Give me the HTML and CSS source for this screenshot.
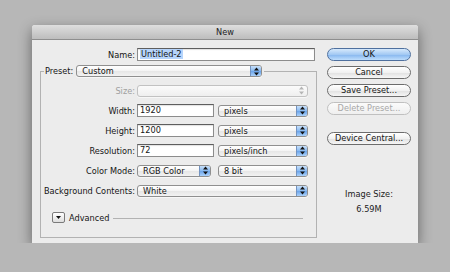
FILE: index.html
```html
<!DOCTYPE html>
<html lang="en">
<head>
    <meta charset="UTF-8">
    <title>New</title>
    <link rel="stylesheet" href="styles.css">
</head>
<body>
    <div class="dialog">
        <div class="titlebar">New</div>
        <div class="content">
            <div class="form">
                <div class="row">
                    <span class="label wide">Name:</span>
                    <div class="field name"><span class="sel">Untitled-2</span></div>
                </div>
                <fieldset class="group">
                    <legend class="preset">
                        <span>Preset:</span>
                        <div class="select w-preset"><span class="val">Custom</span><span class="step"><svg width="5" height="9" viewBox="0 0 5 9"><polygon points="2.5,0.5 5,3.5 0,3.5"/><polygon points="0,5.5 5,5.5 2.5,8.5"/></svg></span></div>
                    </legend>
                    <div class="rows">
                        <div class="row">
                            <span class="label dim">Size:</span>
                            <div class="select w-full off"><span class="val"></span><span class="step"><svg width="5" height="9" viewBox="0 0 5 9"><polygon points="2.5,0.5 5,3.5 0,3.5"/><polygon points="0,5.5 5,5.5 2.5,8.5"/></svg></span></div>
                        </div>
                        <div class="row">
                            <span class="label">Width:</span>
                            <div class="field num">1920</div>
                            <div class="select w-unit"><span class="val">pixels</span><span class="step"><svg width="5" height="9" viewBox="0 0 5 9"><polygon points="2.5,0.5 5,3.5 0,3.5"/><polygon points="0,5.5 5,5.5 2.5,8.5"/></svg></span></div>
                        </div>
                        <div class="row">
                            <span class="label">Height:</span>
                            <div class="field num">1200</div>
                            <div class="select w-unit"><span class="val">pixels</span><span class="step"><svg width="5" height="9" viewBox="0 0 5 9"><polygon points="2.5,0.5 5,3.5 0,3.5"/><polygon points="0,5.5 5,5.5 2.5,8.5"/></svg></span></div>
                        </div>
                        <div class="row">
                            <span class="label">Resolution:</span>
                            <div class="field num">72</div>
                            <div class="select w-unit"><span class="val">pixels/inch</span><span class="step"><svg width="5" height="9" viewBox="0 0 5 9"><polygon points="2.5,0.5 5,3.5 0,3.5"/><polygon points="0,5.5 5,5.5 2.5,8.5"/></svg></span></div>
                        </div>
                        <div class="row">
                            <span class="label">Color Mode:</span>
                            <div class="select w-mode"><span class="val">RGB Color</span><span class="step"><svg width="5" height="9" viewBox="0 0 5 9"><polygon points="2.5,0.5 5,3.5 0,3.5"/><polygon points="0,5.5 5,5.5 2.5,8.5"/></svg></span></div>
                            <div class="select w-unit"><span class="val">8 bit</span><span class="step"><svg width="5" height="9" viewBox="0 0 5 9"><polygon points="2.5,0.5 5,3.5 0,3.5"/><polygon points="0,5.5 5,5.5 2.5,8.5"/></svg></span></div>
                        </div>
                        <div class="row">
                            <span class="label">Background Contents:</span>
                            <div class="select w-full"><span class="val">White</span><span class="step"><svg width="5" height="9" viewBox="0 0 5 9"><polygon points="2.5,0.5 5,3.5 0,3.5"/><polygon points="0,5.5 5,5.5 2.5,8.5"/></svg></span></div>
                        </div>
                    </div>
                    <div class="advanced">
                        <span class="disclose"><svg width="5" height="3" viewBox="0 0 5 3"><polygon points="0,0 5,0 2.5,3"/></svg></span>
                        <span>Advanced</span>
                        <span class="rule"></span>
                    </div>
                </fieldset>
            </div>
            <div class="side">
                <div class="btn ok">OK</div>
                <div class="btn">Cancel</div>
                <div class="btn">Save Preset...</div>
                <div class="btn off">Delete Preset...</div>
                <div class="btn central">Device Central...</div>
                <div class="imgsize">
                    <div>Image Size:</div>
                    <div>6.59M</div>
                </div>
            </div>
        </div>
    </div>
</body>
</html>
```

FILE: styles.css
```css
* { margin: 0; padding: 0; box-sizing: border-box; }
body {
    background: #b7b7b7;
    font-family: "DejaVu Sans", sans-serif;
    font-size: 8.2px;
    color: #151515;
}
.dialog {
    margin: 25px 0 0 32px;
    width: 386px;
    background: #ececec;
    border-radius: 3px 3px 0 0;
    box-shadow: 0 5px 14px rgba(0, 0, 0, 0.45);
}
.titlebar {
    height: 15px;
    line-height: 14px;
    text-align: center;
    color: #222;
    background: linear-gradient(#dedede, #bdbdbd);
    border-bottom: 1px solid #8e8e8e;
    border-radius: 3px 3px 0 0;
}
.content {
    display: flex;
    gap: 10px;
    padding: 8px 7px 5px 0;
}
.form { width: 285px; }
.row {
    display: flex;
    align-items: center;
    gap: 4px;
    height: 13px;
}
.label {
    width: 94px;
    margin-right: -2px;
    text-align: right;
    white-space: nowrap;
}
.label.wide { width: 103px; }
.label.dim { color: #a0a0a0; }

/* text fields */
.field {
    height: 13px;
    line-height: 11px;
    padding-left: 2px;
    background: #fff;
    border: 1px solid #8c8c8c;
    border-top-color: #5e5e5e;
    box-shadow: inset 0 1px 1px rgba(0, 0, 0, 0.12);
}
.field.name { width: 178px; }
.field.num { width: 77px; }
.sel { background: #b6d4fb; padding: 0 1px; }

/* popup menus */
.select {
    display: flex;
    height: 12px;
    line-height: 10px;
    border: 1px solid #8f8f8f;
    border-radius: 3px;
    background: linear-gradient(#ffffff, #f3f3f3 50%, #e6e6e6 51%, #f2f2f2);
    box-shadow: 0 1px 0 rgba(255, 255, 255, 0.6);
    overflow: hidden;
}
.select .val { padding-left: 5px; flex: 1; }
.select .step {
    width: 11px;
    display: flex;
    align-items: center;
    justify-content: center;
    background: linear-gradient(#c8e0fa, #86b8f0 50%, #6aa3e9 51%, #acd2fb);
    border-left: 1px solid #7393c0;
}
.select svg { fill: #111; }
.select.off { border-color: #c2c2c2; background: linear-gradient(#fbfbfb, #efefef); }
.select.off .step { background: none; border-left: none; }
.select.off svg { fill: #b5b5b5; }
.w-preset { width: 186px; }
.w-full { width: 171px; }
.w-unit { width: 90px; }
.w-mode { width: 74px; margin-right: 3px; }

/* preset group */
.group {
    margin: 4px 0 0 8px;
    border: 1px solid #b2b2b2;
    padding: 7px 0 14px;
    min-width: 0;
}
.preset {
    display: flex;
    align-items: center;
    gap: 3px;
    margin-left: 3px;
    padding: 0 2px 0 1px;
}
.rows {
    display: flex;
    flex-direction: column;
    gap: 7px;
}
.advanced {
    display: flex;
    align-items: center;
    gap: 4px;
    height: 11px;
    margin-top: 15px;
    padding: 0 13px 0 11px;
}
.disclose {
    width: 13px;
    height: 11px;
    display: flex;
    align-items: center;
    justify-content: center;
    border: 1px solid #7a7a7a;
    border-radius: 2px;
    background: linear-gradient(#ffffff, #dedede);
}
.disclose svg { fill: #111; }
.rule {
    flex: 1;
    border-top: 1px solid #b2b2b2;
    margin-top: 1px;
}

/* buttons */
.side {
    width: 84px;
    display: flex;
    flex-direction: column;
    gap: 5px;
}
.btn {
    height: 13px;
    line-height: 11px;
    text-align: center;
    border: 1px solid #6c6c6c;
    border-radius: 7px;
    background: linear-gradient(#ffffff, #f1f1f1 50%, #e0e0e0 51%, #f6f6f6);
}
.btn.ok {
    border-color: #4f709e;
    background: linear-gradient(#d6e9fc, #a3c9f3 50%, #84b5ef 51%, #bfdefc);
}
.btn.off {
    color: #a8a8a8;
    border-color: #c0c0c0;
    background: linear-gradient(#fbfbfb, #efefef);
}
.btn.central { margin-top: 12px; }
.imgsize {
    margin-top: 37px;
    text-align: center;
    line-height: 15px;
    color: #222;
}
```
